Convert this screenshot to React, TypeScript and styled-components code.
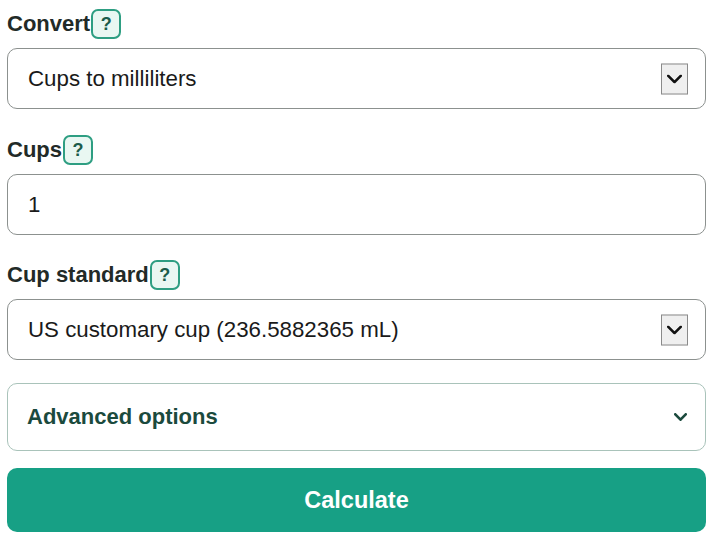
import React from "react";
import styled, { createGlobalStyle } from "styled-components";

const Global = createGlobalStyle`
  html, body { margin: 0; padding: 0; background: #fff; }
  body { font-family: "Liberation Sans", Arial, sans-serif; color: #222; }
  * { box-sizing: border-box; }
`;

const Form = styled.form`
  display: flex;
  flex-direction: column;
  padding: 9px 7px 0 7px;
  width: 713px;
`;

const Field = styled.div<{ $gapAfter?: number }>`
  display: flex;
  flex-direction: column;
  gap: 9px;
  margin-bottom: ${(p) => p.$gapAfter ?? 26}px;
`;

const LabelRow = styled.label`
  display: flex;
  align-items: center;
  height: 30px;
  font-size: 22px;
  font-weight: 700;
  color: #222a27;
`;

const Help = styled.span`
  display: inline-flex;
  align-items: center;
  justify-content: center;
  width: 30px;
  height: 30px;
  margin-left: 1px;
  border: 2px solid #2e9e82;
  border-radius: 7px;
  background: #e9f7f2;
  color: #1b5c4a;
  font-size: 18px;
  font-weight: 700;
`;

const SelectWrap = styled.div`
  position: relative;
  height: 61px;
`;

const Select = styled.select`
  appearance: none;
  width: 100%;
  height: 100%;
  border: 1px solid #8c918f;
  border-radius: 10px;
  background: #fff;
  padding: 0 60px 0 20px;
  font-family: "Liberation Sans", Arial, sans-serif;
  font-size: 22.3px;
  color: #1a1a1a;
  outline: none;
`;

const ArrowBox = styled.span`
  position: absolute;
  right: 18px;
  top: 50%;
  transform: translateY(-50%);
  width: 27px;
  height: 31px;
  display: flex;
  align-items: center;
  justify-content: center;
  background: #efefef;
  border: 1px solid #8a8a8a;
  pointer-events: none;
`;

const Input = styled.input`
  width: 100%;
  height: 61px;
  border: 1px solid #8c918f;
  border-radius: 10px;
  padding: 0 20px;
  font-family: "Liberation Sans", Arial, sans-serif;
  font-size: 22.3px;
  color: #1a1a1a;
  outline: none;
`;

const Advanced = styled.button`
  display: flex;
  align-items: center;
  justify-content: space-between;
  width: 100%;
  height: 68px;
  margin-top: -3px;
  padding: 0 18px 0 19px;
  border: 1px solid #a9c3ba;
  border-radius: 10px;
  background: #fff;
  font-family: "Liberation Sans", Arial, sans-serif;
  font-size: 22px;
  font-weight: 700;
  color: #1b4a3d;
  cursor: pointer;
`;

const Calculate = styled.button`
  width: 100%;
  height: 64px;
  margin-top: 17px;
  border: none;
  border-radius: 10px;
  background: #17a085;
  color: #fff;
  font-family: "Liberation Sans", Arial, sans-serif;
  font-size: 23.5px;
  font-weight: 700;
  cursor: pointer;
`;

const Chevron = ({ color, w, h, sw }: { color: string; w: number; h: number; sw: number }) => (
  <svg width={w} height={h} viewBox={`0 0 ${w} ${h}`} fill="none">
    <path
      d={`M${sw / 2} ${sw / 2} L${w / 2} ${h - sw / 2} L${w - sw / 2} ${sw / 2}`}
      stroke={color}
      strokeWidth={sw}
      strokeLinecap="round"
      strokeLinejoin="round"
    />
  </svg>
);

const SelectField = ({ label, value }: { label: string; value: string }) => (
  <Field>
    <LabelRow>
      {label}
      <Help>?</Help>
    </LabelRow>
    <SelectWrap>
      <Select defaultValue={value}>
        <option>{value}</option>
      </Select>
      <ArrowBox>
        <Chevron color="#111" w={15} h={9} sw={2.6} />
      </ArrowBox>
    </SelectWrap>
  </Field>
);

export default function App() {
  return (
    <>
      <Global />
      <Form onSubmit={(e) => e.preventDefault()}>
        <SelectField label="Convert" value="Cups to milliliters" />
        <Field $gapAfter={25}>
          <LabelRow>
            Cups
            <Help>?</Help>
          </LabelRow>
          <Input defaultValue="1" />
        </Field>
        <SelectField label="Cup standard" value="US customary cup (236.5882365 mL)" />
        <Advanced type="button">
          Advanced options
          <Chevron color="#1b4a3d" w={13} h={8} sw={2.6} />
        </Advanced>
        <Calculate type="submit">Calculate</Calculate>
      </Form>
    </>
  );
}
